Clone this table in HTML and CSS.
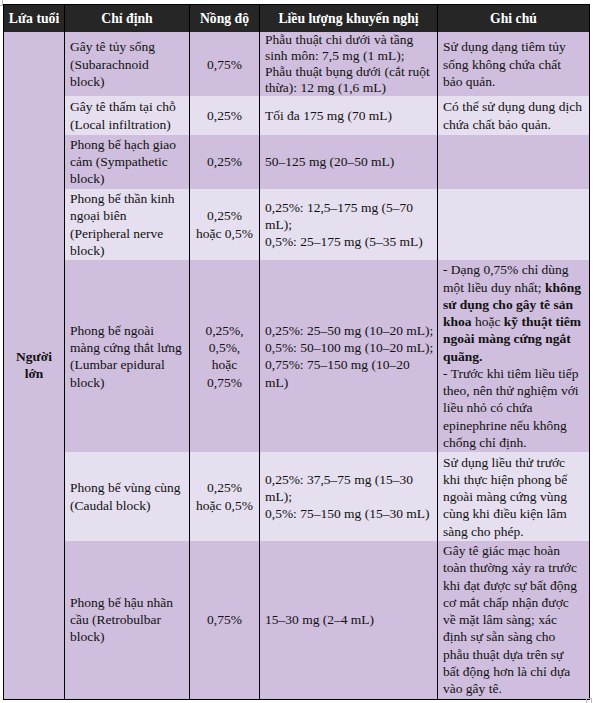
FILE: index.html
```html
<!DOCTYPE html>
<html lang="vi">
<head>
<meta charset="utf-8">
<title>Liều dùng</title>
<link rel="stylesheet" href="styles.css">
</head>
<body>
<span class="mark mark-tl"></span>
<table class="dose">
  <colgroup>
    <col class="c-age"><col class="c-ind"><col class="c-conc"><col class="c-dose"><col class="c-note">
  </colgroup>
  <thead>
    <tr>
      <th>Lứa tuổi</th>
      <th>Chỉ định</th>
      <th>Nồng độ</th>
      <th>Liều lượng khuyến nghị</th>
      <th>Ghi chú</th>
    </tr>
  </thead>
  <tbody>
    <tr class="dark first">
      <td class="age" rowspan="7">Người<br>lớn</td>
      <td>Gây tê tủy sống<br>(Subarachnoid<br>block)</td>
      <td class="ctr">0,75%</td>
      <td class="tight">Phẫu thuật chi dưới và tầng<br>sinh môn: 7,5 mg (1 mL);<br>Phẫu thuật bụng dưới (cắt ruột<br>thừa): 12 mg (1,6 mL)</td>
      <td>Sử dụng dạng tiêm tủy<br>sống không chứa chất<br>bảo quản.</td>
    </tr>
    <tr class="light roomy">
      <td>Gây tê thấm tại chỗ<br>(Local infiltration)</td>
      <td class="ctr">0,25%</td>
      <td>Tối đa 175 mg (70 mL)</td>
      <td>Có thể sử dụng dung dịch<br>chứa chất bảo quản.</td>
    </tr>
    <tr class="dark">
      <td>Phong bế hạch giao<br>cảm (Sympathetic<br>block)</td>
      <td class="ctr">0,25%</td>
      <td>50–125 mg (20–50 mL)</td>
      <td></td>
    </tr>
    <tr class="light">
      <td>Phong bế thần kinh<br>ngoại biên<br>(Peripheral nerve<br>block)</td>
      <td class="ctr">0,25%<br>hoặc 0,5%</td>
      <td>0,25%: 12,5–175 mg (5–70<br>mL);<br>0,5%: 25–175 mg (5–35 mL)</td>
      <td></td>
    </tr>
    <tr class="dark">
      <td>Phong bế ngoài<br>màng cứng thắt lưng<br>(Lumbar epidural<br>block)</td>
      <td class="ctr">0,25%,<br>0,5%,<br>hoặc<br>0,75%</td>
      <td>0,25%: 25–50 mg (10–20 mL);<br>0,5%: 50–100 mg (10–20 mL);<br>0,75%: 75–150 mg (10–20<br>mL)</td>
      <td>- Dạng 0,75% chỉ dùng<br>một liều duy nhất; <b>không</b><br><b>sử dụng cho gây tê sản</b><br><b>khoa</b> hoặc <b>kỹ thuật tiêm</b><br><b>ngoài màng cứng ngắt</b><br><b>quãng.</b><br>- Trước khi tiêm liều tiếp<br>theo, nên thử nghiệm với<br>liều nhỏ có chứa<br>epinephrine nếu không<br>chống chỉ định.</td>
    </tr>
    <tr class="light">
      <td>Phong bế vùng cùng<br>(Caudal block)</td>
      <td class="ctr">0,25%<br>hoặc 0,5%</td>
      <td>0,25%: 37,5–75 mg (15–30<br>mL);<br>0,5%: 75–150 mg (15–30 mL)</td>
      <td>Sử dụng liều thử trước<br>khi thực hiện phong bế<br>ngoài màng cứng vùng<br>cùng khi điều kiện lâm<br>sàng cho phép.</td>
    </tr>
    <tr class="dark">
      <td>Phong bế hậu nhãn<br>cầu (Retrobulbar<br>block)</td>
      <td class="ctr">0,75%</td>
      <td>15–30 mg (2–4 mL)</td>
      <td>Gây tê giác mạc hoàn<br>toàn thường xảy ra trước<br>khi đạt được sự bất động<br>cơ mắt chấp nhận được<br>về mặt lâm sàng; xác<br>định sự sẵn sàng cho<br>phẫu thuật dựa trên sự<br>bất động hơn là chỉ dựa<br>vào gây tê.</td>
    </tr>
  </tbody>
</table>
<span class="mark mark-br"></span>
</body>
</html>
```
FILE: styles.css
```css
html, body {
  margin: 0;
  padding: 0;
  background: #ffffff;
}

body {
  position: relative;
  width: 593px;
  height: 703px;
  font-family: "Liberation Serif", "Times New Roman", serif;
  font-size: 13.5px;
  line-height: 17.25px;
  color: #111111;
}

.dose {
  margin: 4px 0 0 3px;
  width: 586px;
  border-collapse: collapse;
  table-layout: fixed;
  border: 1px solid #000000;
}

.c-age { width: 61px; }
.c-ind { width: 125px; }
.c-conc { width: 70px; }
.c-dose { width: 178px; }
.c-note { width: 152px; }

.dose th {
  background: #262626;
  color: #ffffff;
  font-weight: bold;
  font-size: 13.7px;
  text-align: center;
  padding: 5px 2px 5px 2px;
  border-left: 1px solid #000000;
  border-right: 1px solid #000000;
  white-space: nowrap;
}

.dose td {
  padding: 1.2px 3px 1.2px 5px;
  vertical-align: middle;
  text-align: left;
  border-left: 1px solid #000000;
  border-right: 1px solid #000000;
  white-space: nowrap;
}

.dose tr.dark td { background: #cfbedd; }
.dose tr.light td { background: #e6dfef; }

.dose tr.roomy td {
  padding-top: 2px;
  padding-bottom: 2px;
}

.dose td.tight {
  line-height: 16px;
  padding-top: 0;
  padding-bottom: 0;
}

.dose td.ctr {
  text-align: center;
  padding-left: 2px;
  padding-right: 2px;
}

.dose td.age {
  background: #cfbedd;
  font-weight: bold;
  text-align: center;
  padding: 0 2px;
}

.mark {
  position: absolute;
  display: block;
  border-color: #b9b9b9;
  border-style: solid;
}

.mark-tl {
  left: 0;
  top: 0;
  width: 2px;
  height: 5px;
  border-width: 0 1px 1px 0;
}

.mark-br {
  left: 586px;
  top: 698px;
  width: 4px;
  height: 5px;
  border-width: 1px 1px 0 1px;
}
```
